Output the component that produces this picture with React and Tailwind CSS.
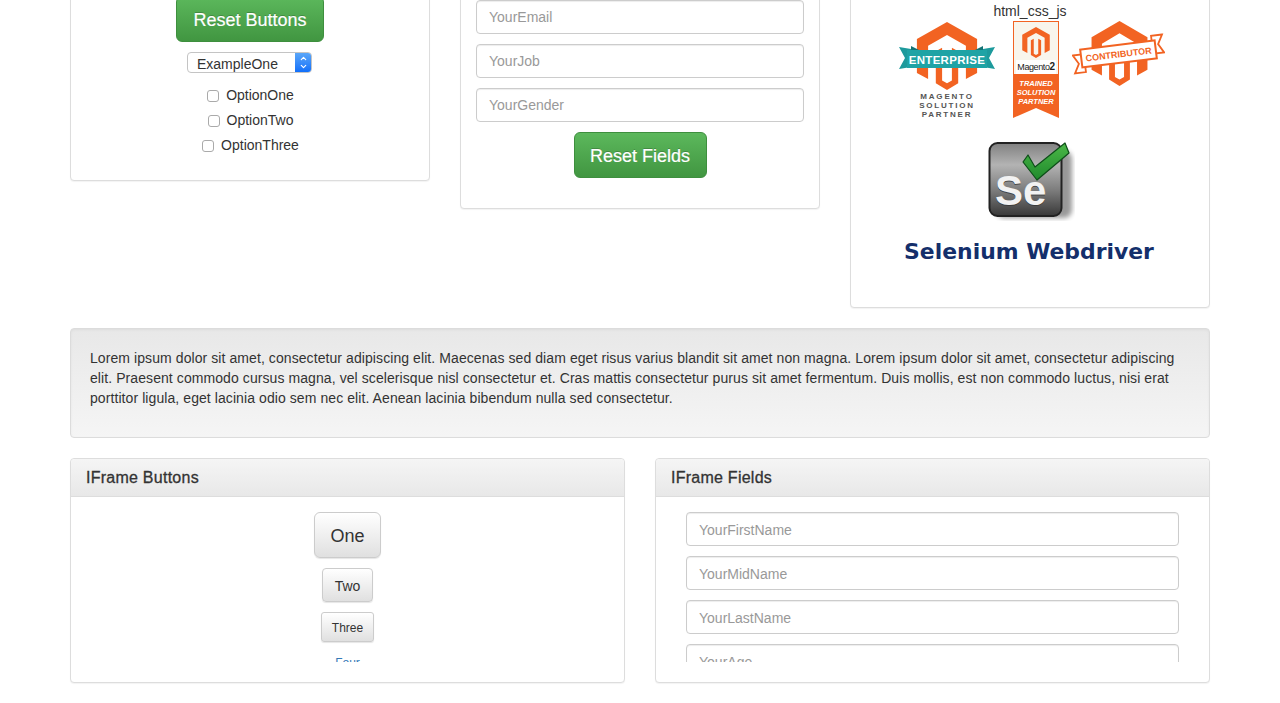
import { ChevronUp, ChevronDown } from 'lucide-react'

const orange = '#f26322'

const MagentoMark = ({ fill = orange }) => (
  <path
    fill={fill}
    d="M50 0 L93 25 V75 L77 84 V35 L50 19 L23 35 V84 L7 75 V25 Z M34 43 L43 38 V86 L50 90 L57 86 V38 L66 43 V90 L50 100 L34 90 Z"
  />
)

function EnterpriseBadge() {
  return (
    <svg width="96" height="97" viewBox="0 0 96 97" className="shrink-0">
      <g transform="translate(13 1) scale(0.7 0.68)">
        <MagentoMark />
      </g>
      <path d="M0 26 L12 28 V46 L0 48 L6 37 Z" fill="#1d9a9c" />
      <path d="M96 26 L84 28 V46 L96 48 L90 37 Z" fill="#1d9a9c" />
      <path d="M12 25 L20 29 H12 Z M84 25 L76 29 H84 Z" fill="#147375" />
      <rect x="8" y="29" width="80" height="18" fill="#1fa3a5" />
      <text x="48" y="42.5" textAnchor="middle" fill="#fff" fontSize="11.5" fontWeight="700" fontFamily="'Liberation Sans', sans-serif" letterSpacing="0.3">ENTERPRISE</text>
      <g fill="#555" fontSize="8" fontWeight="700" fontFamily="'Liberation Sans', sans-serif" textAnchor="middle" letterSpacing="1.8">
        <text x="48" y="77.5">MAGENTO</text>
        <text x="48" y="86.5">SOLUTION</text>
        <text x="48" y="95.5">PARTNER</text>
      </g>
    </svg>
  )
}

function TrainedBadge() {
  return (
    <svg width="46" height="97" viewBox="0 0 46 97" className="shrink-0">
      <path d="M0 0 H46 V97 L23 87 L0 97 Z" fill={orange} />
      <rect x="1" y="1" width="44" height="52" fill="#f8f5ec" />
      <rect x="3" y="39" width="40" height="14" fill="#fff" />
      <g transform="translate(7 6) scale(0.32 0.31)">
        <MagentoMark />
      </g>
      <text x="23" y="49" textAnchor="middle" fill="#222" fontSize="9" fontFamily="'Liberation Sans', sans-serif" letterSpacing="-0.4">
        Magento<tspan fontWeight="700" fontSize="10">2</tspan>
      </text>
      <g fill="#fff" fontSize="7.5" fontWeight="700" fontStyle="italic" fontFamily="'Liberation Sans', sans-serif" textAnchor="middle">
        <text x="23" y="65">TRAINED</text>
        <text x="23" y="74">SOLUTION</text>
        <text x="23" y="83">PARTNER</text>
      </g>
    </svg>
  )
}

function ContributorBadge() {
  return (
    <svg width="93" height="66" viewBox="0 0 93 66" className="shrink-0">
      <g transform="translate(15 0) scale(0.65)">
        <MagentoMark />
      </g>
      <g transform="rotate(-7 46 33)">
        <path d="M1 29 L12 29 V47 L1 47 L6 38 Z" fill="#fff" stroke={orange} strokeWidth="1.8" />
        <path d="M92 19 L81 19 V37 L92 37 L87 28 Z" fill="#fff" stroke={orange} strokeWidth="1.8" />
        <rect x="9" y="24" width="75" height="18" fill="#fff" stroke={orange} strokeWidth="2" />
        <text x="46.5" y="36.5" textAnchor="middle" fill={orange} fontSize="9" fontWeight="700" fontFamily="'Liberation Sans', sans-serif">CONTRIBUTOR</text>
      </g>
    </svg>
  )
}

function SeleniumLogo() {
  return (
    <svg width="87" height="80" viewBox="0 0 87 80">
      <defs>
        <linearGradient id="seFace" x1="0" y1="0" x2="0" y2="1">
          <stop offset="0" stopColor="#808080" />
          <stop offset="0.3" stopColor="#b3b3b3" />
          <stop offset="0.65" stopColor="#7c7c7c" />
          <stop offset="1" stopColor="#383838" />
        </linearGradient>
        <linearGradient id="seCheck" x1="0" y1="0" x2="0" y2="1">
          <stop offset="0" stopColor="#4cb848" />
          <stop offset="1" stopColor="#1f8a2c" />
        </linearGradient>
        <filter id="seBlur" x="-20%" y="-20%" width="140%" height="140%">
          <feGaussianBlur stdDeviation="2.5" />
        </filter>
      </defs>
      <rect x="8" y="10" width="76" height="67" rx="8" fill="#000" opacity="0.4" filter="url(#seBlur)" />
      <rect x="1.5" y="2" width="72" height="73" rx="8" fill="url(#seFace)" stroke="#222" strokeWidth="2" />
      <text x="7" y="65" fill="#333" fontSize="42" fontWeight="700" fontFamily="'Liberation Sans', sans-serif" opacity="0.8">Se</text>
      <text x="7" y="64" fill="#f2f2f2" fontSize="42" fontWeight="700" fontFamily="'Liberation Sans', sans-serif">Se</text>
      <path d="M35 21 L40 14 L47 26 L77 2 L81 12 L49 39 Z" fill="url(#seCheck)" stroke="#0d4d18" strokeWidth="1.2" strokeLinejoin="round" />
    </svg>
  )
}

const Card = ({ className = '', children }) => (
  <div className={`w-[360px] bg-white border border-[#ddd] rounded shadow-[0_1px_1px_rgba(0,0,0,0.05)] ${className}`}>
    {children}
  </div>
)

const TextField = ({ placeholder, className = '' }) => (
  <input
    placeholder={placeholder}
    className={`block w-full h-[34px] px-3 text-sm text-[#555] bg-white border border-[#ccc] rounded shadow-[inset_0_1px_1px_rgba(0,0,0,0.075)] placeholder:text-[#999] ${className}`}
  />
)

const GreenButton = ({ children, className = '' }) => (
  <button className={`pt-[2px] text-lg text-white rounded-md border border-[#3e8f3e] bg-linear-to-b from-[#5cb85c] to-[#419641] [text-shadow:0_-1px_0_rgba(0,0,0,0.2)] [-webkit-text-stroke:0.2px_#fff] ${className}`}>
    {children}
  </button>
)

const Option = ({ label }) => (
  <label className="flex items-center gap-[7px] h-[25px] pl-[1px] text-sm text-[#333]">
    <input type="checkbox" className="appearance-none mt-[2px] w-3 h-3 bg-white border border-[#aaa] rounded-[3px]" />
    {label}
  </label>
)

const GreyButton = ({ children, className = '' }) => (
  <button className={`pt-[2px] text-[#333] border border-[#ccc] bg-linear-to-b from-white to-[#e0e0e0] shadow-[0_1px_1px_rgba(0,0,0,0.1)] ${className}`}>
    {children}
  </button>
)

const Panel = ({ title, children }) => (
  <div className="w-[555px] h-[225px] bg-white border border-[#ddd] rounded shadow-[0_1px_1px_rgba(0,0,0,0.05)]">
    <div className="h-[38px] flex items-center px-[15px] text-base tracking-[0.25px] text-[#333] border-b border-[#ddd] rounded-t bg-linear-to-b from-[#f5f5f5] to-[#e8e8e8] [-webkit-text-stroke:0.3px_#333]">
      {title}
    </div>
    <div className="h-[165px] overflow-hidden">{children}</div>
  </div>
)

export default function App() {
  return (
    <div className="h-[703px] overflow-hidden bg-white text-[#333] font-['Liberation_Sans',Arial,sans-serif]">
      <div className="px-[70px] -mt-[60px] flex flex-col gap-5">
        {/* top row, page is scrolled so the card tops are cut off */}
        <div className="flex items-start gap-[30px]">
          <Card className="h-[241px] pt-[55px] flex flex-col items-center">
            <GreenButton className="w-[148px] h-[46px]">Reset Buttons</GreenButton>
            <div className="mt-[10px] mr-[1px] w-[125px] h-[21px] flex items-center bg-white border border-[#c4c4c4] rounded-[4px] overflow-hidden">
              <span className="flex-1 pl-[9px] pt-[2px] text-sm leading-none text-[#333]">ExampleOne</span>
              <span className="w-4 h-full flex flex-col items-center justify-center bg-linear-to-b from-[#5aa6f8] to-[#0f6ffa] text-white">
                <ChevronUp size={9} strokeWidth={3} className="-mb-[1px]" />
                <ChevronDown size={9} strokeWidth={3} />
              </span>
            </div>
            <div className="mt-[9px] flex flex-col items-center">
              <Option label="OptionOne" />
              <Option label="OptionTwo" />
              <Option label="OptionThree" />
            </div>
          </Card>

          <Card className="h-[269px] pt-[59px] px-[15px]">
            <div className="flex flex-col gap-[10px]">
              <TextField placeholder="YourEmail" />
              <TextField placeholder="YourJob" />
              <TextField placeholder="YourGender" />
            </div>
            <div className="mt-[10px] flex justify-center">
              <GreenButton className="w-[133px] h-[46px]">Reset Fields</GreenButton>
            </div>
          </Card>

          <Card className="h-[368px] pt-[60px] flex flex-col items-center">
            <p className="text-sm leading-[20px] text-[#333]">html_css_js</p>
            <div className="flex items-start pl-[3px]">
              <EnterpriseBadge />
              <div className="ml-[18px]"><TrainedBadge /></div>
              <div className="ml-[13px]"><ContributorBadge /></div>
            </div>
            <div className="mt-[23px] ml-[3px]">
              <SeleniumLogo />
            </div>
            <p className="mt-[15px] mr-[2px] text-[21.9px] leading-[32px] font-bold text-[#142f6b] font-['DejaVu_Sans',sans-serif]">Selenium Webdriver</p>
          </Card>
        </div>

        {/* well */}
        <div className="h-[110px] px-[19px] py-[19px] border border-[#dcdcdc] rounded bg-linear-to-b from-[#e8e8e8] to-[#f5f5f5] shadow-[inset_0_1px_3px_rgba(0,0,0,0.05)]">
          <p className="text-sm leading-5 tracking-[0.08px] text-[#333]">
            Lorem ipsum dolor sit amet, consectetur adipiscing elit. Maecenas sed diam eget risus varius blandit sit amet non magna. Lorem ipsum dolor sit amet, consectetur adipiscing elit. Praesent commodo cursus magna, vel scelerisque nisl consectetur et. Cras mattis consectetur purus sit amet fermentum. Duis mollis, est non commodo luctus, nisi erat porttitor ligula, eget lacinia odio sem nec elit. Aenean lacinia bibendum nulla sed consectetur.
          </p>
        </div>

        {/* iframes */}
        <div className="flex gap-[30px]">
          <Panel title="IFrame Buttons">
            <div className="pt-[15px] flex flex-col items-center">
              <GreyButton className="w-[67px] h-[46px] text-lg rounded-md">One</GreyButton>
              <GreyButton className="mt-[10px] w-[51px] h-[34px] text-sm rounded">Two</GreyButton>
              <GreyButton className="mt-[10px] w-[53px] h-[30px] text-xs rounded-[3px]">Three</GreyButton>
              <a className="mt-[12px] text-xs leading-[18px] text-[#337ab7]">Four</a>
            </div>
          </Panel>
          <Panel title="IFrame Fields">
            <div className="pt-[15px] px-[30px] flex flex-col gap-[10px]">
              <TextField className="pt-[2px]" placeholder="YourFirstName" />
              <TextField className="pt-[2px]" placeholder="YourMidName" />
              <TextField className="pt-[2px]" placeholder="YourLastName" />
              <TextField className="pt-[2px]" placeholder="YourAge" />
            </div>
          </Panel>
        </div>
      </div>
    </div>
  )
}
